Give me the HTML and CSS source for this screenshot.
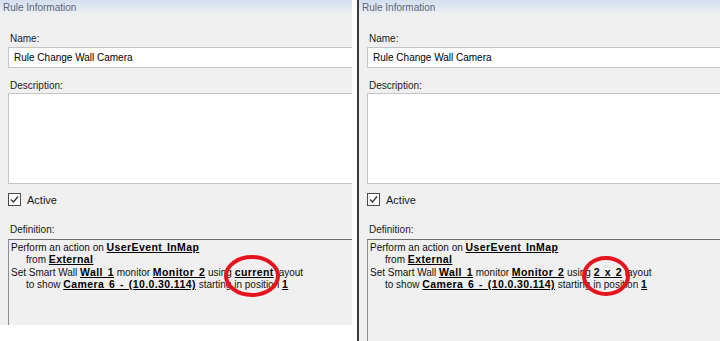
FILE: index.html
```html
<!DOCTYPE html>
<html lang="en">
<head>
    <meta charset="UTF-8">
    <title>Rule Information</title>
    <link rel="stylesheet" href="styles.css">
</head>
<body>
    <div class="panel panel-left">
        <div class="panel-header">Rule Information</div>
        <div class="form">
            <div class="label">Name:</div>
            <div class="textbox">Rule Change Wall Camera</div>
            <div class="label label-desc">Description:</div>
            <div class="textarea"></div>
            <div class="check-row">
                <span class="checkbox">
                    <svg width="11" height="11" viewBox="0 0 11 11"><path d="M2 5.5 L4.5 8 L9 2.5" fill="none" stroke="#333" stroke-width="1.3"/></svg>
                </span>
                Active
            </div>
            <div class="label label-def">Definition:</div>
            <div class="definition">
                <div>Perform an action on <b>UserEvent InMap</b></div>
                <div class="indent">from <b>External</b></div>
                <div>Set Smart Wall <b>Wall 1</b> monitor <b>Monitor 2</b> using <b>current</b> layout</div>
                <div class="indent">to show <b>Camera 6 - (10.0.30.114)</b> starting in position <b>1</b></div>
                <svg class="mark" width="300" height="80"><ellipse cx="243" cy="36" rx="26" ry="19" fill="none" stroke="#e5141f" stroke-width="4"/></svg>
            </div>
        </div>
    </div>

    <div class="panel panel-right">
        <div class="panel-header">Rule Information</div>
        <div class="form">
            <div class="label">Name:</div>
            <div class="textbox">Rule Change Wall Camera</div>
            <div class="label label-desc">Description:</div>
            <div class="textarea"></div>
            <div class="check-row">
                <span class="checkbox">
                    <svg width="11" height="11" viewBox="0 0 11 11"><path d="M2 5.5 L4.5 8 L9 2.5" fill="none" stroke="#333" stroke-width="1.3"/></svg>
                </span>
                Active
            </div>
            <div class="label label-def">Definition:</div>
            <div class="definition">
                <div>Perform an action on <b>UserEvent InMap</b></div>
                <div class="indent">from <b>External</b></div>
                <div>Set Smart Wall <b>Wall 1</b> monitor <b>Monitor 2</b> using <b>2 x 2</b> layout</div>
                <div class="indent">to show <b>Camera 6 - (10.0.30.114)</b> starting in position <b>1</b></div>
                <svg class="mark" width="300" height="80"><ellipse cx="238" cy="36" rx="22" ry="18" fill="none" stroke="#e5141f" stroke-width="4"/></svg>
            </div>
        </div>
    </div>
</body>
</html>
```

FILE: styles.css
```css
body {
    margin: 0;
    background: #fff;
    display: flex;
    align-items: flex-start;
    font-family: "Liberation Sans", Arial, sans-serif;
    font-size: 10px;
    color: #1a1a1a;
    overflow: hidden;
}
.panel {
    background: #f0f0f0;
    display: flex;
    flex-direction: column;
    overflow: hidden;
}
.panel-left {
    width: 352px;
    height: 325px;
    margin-right: 5px;
}
.panel-right {
    width: 361px;
    height: 341px;
    border-left: 2px solid #3a3a3a;
}
.panel-header {
    height: 16px;
    line-height: 15px;
    padding-left: 3px;
    color: #5b6577;
    background: linear-gradient(#d4deee, #e6ebf2 60%, #f0f0f0);
}
.form {
    padding-left: 8px;
    display: flex;
    flex-direction: column;
    flex: 1;
}
.label {
    height: 13px;
    line-height: 13px;
    padding-left: 2px;
    margin-top: 16px;
    margin-bottom: 2px;
}
.label-desc {
    margin-top: 11px;
    margin-bottom: 1px;
}
.label-def {
    margin-top: 17px;
    margin-bottom: 3px;
}
.textbox {
    height: 19px;
    line-height: 19px;
    padding-left: 5px;
    background: #fff;
    border: 1px solid #c3c5c9;
    border-right: none;
    color: #000;
}
.textarea {
    height: 89px;
    background: #fff;
    border: 1px solid #c3c5c9;
    border-right: none;
}
.check-row {
    display: flex;
    align-items: center;
    gap: 6px;
    height: 13px;
    margin-top: 9px;
    font-size: 11px;
}
.checkbox {
    width: 11px;
    height: 11px;
    border: 1px solid #4a4a4a;
    background: #fff;
    display: flex;
}
.definition {
    position: relative;
    flex: 1;
    border: 1px solid #8b8d90;
    border-top-color: #6a6c70;
    border-right: none;
    border-bottom: none;
    padding: 2px 0 0 2px;
    line-height: 12.2px;
    color: #111;
}
.definition div {
    height: 12.3px;
    white-space: nowrap;
}
.definition b {
    font-size: 10.5px;
    line-height: 10px;
    letter-spacing: 0.4px;
    word-spacing: 1.5px;
    text-decoration: underline;
    text-decoration-thickness: 1px;
    text-underline-offset: 1px;
    color: #000;
}
.indent {
    padding-left: 15px;
}
.mark {
    position: absolute;
    left: 0;
    top: 0;
}
```
